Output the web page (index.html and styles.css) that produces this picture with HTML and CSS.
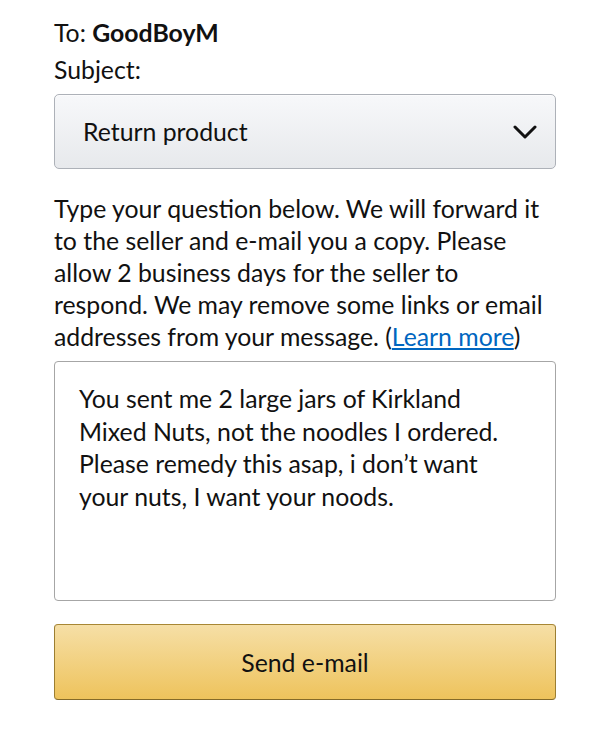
FILE: index.html
```html
<!DOCTYPE html>
<html>
<head>
<meta charset="utf-8">
<link rel="stylesheet" href="styles.css">
</head>
<body>
<div class="page">
  <div class="to">To: <b>GoodBoyM</b></div>
  <div class="subject-label">Subject:</div>
  <div class="select">
    <span>Return product</span>
    <svg class="chev" width="24" height="16" viewBox="0 0 24 16"><path d="M2 3 L12 13 L22 3" fill="none" stroke="#111" stroke-width="3" stroke-linecap="round" stroke-linejoin="round"/></svg>
  </div>
  <p class="info">Type your question below. We will forward it to the seller and e-mail you a copy. Please allow 2 business days for the seller to respond. We may remove some links or email addresses from your message. (<a href="#">Learn more</a>)</p>
  <div class="textarea">You sent me 2 large jars of Kirkland Mixed Nuts, not the noodles I ordered. Please remedy this asap, i don’t want your nuts, I want your noods.</div>
  <div class="button">Send e-mail</div>
</div>
</body>
</html>
```
FILE: styles.css
```css
html, body { margin: 0; padding: 0; background: #fff; }
body { font-family: Lato, "Noto Sans", sans-serif; color: #111; font-size: 24.8px; }
.page { padding: 18px 54px 0 54px; width: 502px; }
.to { line-height: 30px; }
.to b { font-weight: 700; }
.subject-label { line-height: 30px; margin-top: 7px; }
.select {
  margin-top: 9px; height: 75px; box-sizing: border-box;
  border: 1px solid #adb1b8; border-radius: 5px;
  background: linear-gradient(#f7f8fa, #e7e9ec);
  display: flex; align-items: center; justify-content: space-between;
  padding: 0 18px 0 28px; box-shadow: 0 1px 0 rgba(255,255,255,.6) inset;
}
.chev { display: block; }
.info { margin: 24px 0 0 0; line-height: 32px; }
.info a { color: #0066c0; text-decoration: underline; }
.textarea {
  margin-top: 8px; height: 240px; box-sizing: border-box;
  border: 1px solid #a6a6a6; border-radius: 4px;
  padding: 21px 24px; line-height: 32.7px;
}
.button {
  margin-top: 23px; height: 76px; box-sizing: border-box;
  border: 1px solid; border-color: #a88734 #9c7e31 #846a29;
  border-radius: 4px;
  background: linear-gradient(#f6dfa6, #eec35c);
  display: flex; align-items: center; justify-content: center;
}
```
